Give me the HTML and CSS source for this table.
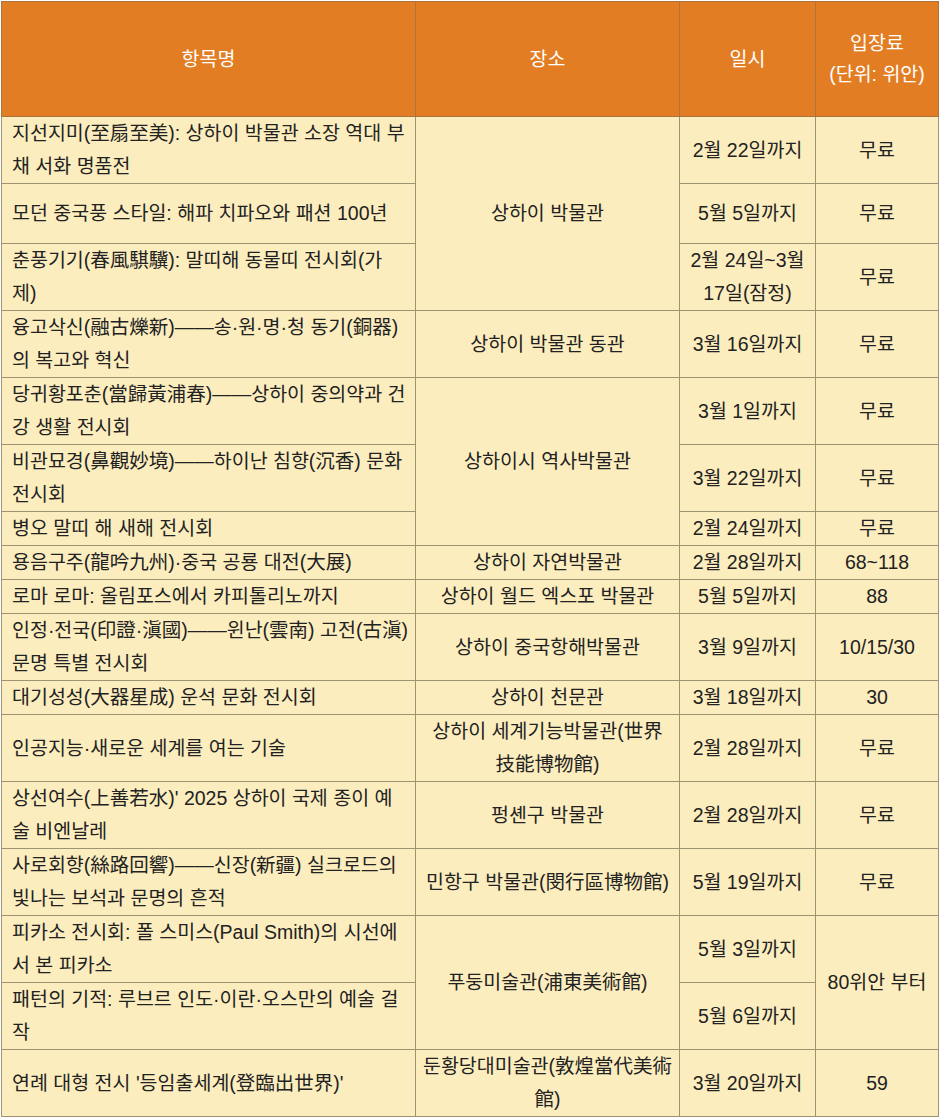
FILE: index.html
```html
<!DOCTYPE html>
<html lang="ko">
<head>
<meta charset="utf-8">
<title>상하이 전시 일정</title>
<link rel="stylesheet" href="styles.css">
</head>
<body>
<div class="page">
<table class="expo">
  <colgroup>
    <col class="c-name">
    <col class="c-place">
    <col class="c-date">
    <col class="c-fee">
  </colgroup>
  <thead>
    <tr class="head-row">
      <th>항목명</th>
      <th>장소</th>
      <th>일시</th>
      <th>입장료<br>(단위: 위안)</th>
    </tr>
  </thead>
  <tbody>
    <tr>
      <td class="name">지선지미(至扇至美): 상하이 박물관 소장 역대 부채 서화 명품전</td>
      <td class="mid" rowspan="3">상하이 박물관</td>
      <td class="mid">2월 22일까지</td>
      <td class="mid">무료</td>
    </tr>
    <tr class="row-60">
      <td class="name">모던 중국풍 스타일: 해파 치파오와 패션 100년</td>
      <td class="mid">5월 5일까지</td>
      <td class="mid">무료</td>
    </tr>
    <tr>
      <td class="name">춘풍기기(春風騏驥): 말띠해 동물띠 전시회(가<br>제)</td>
      <td class="mid">2월 24일~3월 17일(잠정)</td>
      <td class="mid">무료</td>
    </tr>
    <tr>
      <td class="name">융고삭신(融古爍新)——송·원·명·청 동기(銅器)의 복고와 혁신</td>
      <td class="mid">상하이 박물관 동관</td>
      <td class="mid">3월 16일까지</td>
      <td class="mid">무료</td>
    </tr>
    <tr>
      <td class="name">당귀황포춘(當歸黃浦春)——상하이 중의약과 건강 생활 전시회</td>
      <td class="mid" rowspan="3">상하이시 역사박물관</td>
      <td class="mid">3월 1일까지</td>
      <td class="mid">무료</td>
    </tr>
    <tr>
      <td class="name">비관묘경(鼻觀妙境)——하이난 침향(沉香) 문화 전시회</td>
      <td class="mid">3월 22일까지</td>
      <td class="mid">무료</td>
    </tr>
    <tr>
      <td class="name">병오 말띠 해 새해 전시회</td>
      <td class="mid">2월 24일까지</td>
      <td class="mid">무료</td>
    </tr>
    <tr>
      <td class="name">용음구주(龍吟九州)·중국 공룡 대전(大展)</td>
      <td class="mid">상하이 자연박물관</td>
      <td class="mid">2월 28일까지</td>
      <td class="mid">68~118</td>
    </tr>
    <tr>
      <td class="name">로마 로마: 올림포스에서 카피톨리노까지</td>
      <td class="mid">상하이 월드 엑스포 박물관</td>
      <td class="mid">5월 5일까지</td>
      <td class="mid">88</td>
    </tr>
    <tr>
      <td class="name">인정·전국(印證·滇國)——윈난(雲南) 고전(古滇) 문명 특별 전시회</td>
      <td class="mid">상하이 중국항해박물관</td>
      <td class="mid">3월 9일까지</td>
      <td class="mid">10/15/30</td>
    </tr>
    <tr>
      <td class="name">대기성성(大器星成) 운석 문화 전시회</td>
      <td class="mid">상하이 천문관</td>
      <td class="mid">3월 18일까지</td>
      <td class="mid">30</td>
    </tr>
    <tr>
      <td class="name">인공지능·새로운 세계를 여는 기술</td>
      <td class="mid">상하이 세계기능박물관(世界<br>技能博物館)</td>
      <td class="mid">2월 28일까지</td>
      <td class="mid">무료</td>
    </tr>
    <tr>
      <td class="name">상선여수(上善若水)' 2025 상하이 국제 종이 예술 비엔날레</td>
      <td class="mid">펑셴구 박물관</td>
      <td class="mid">2월 28일까지</td>
      <td class="mid">무료</td>
    </tr>
    <tr>
      <td class="name">사로회향(絲路回響)——신장(新疆) 실크로드의 빛나는 보석과 문명의 흔적</td>
      <td class="mid">민항구 박물관(閔行區博物館)</td>
      <td class="mid">5월 19일까지</td>
      <td class="mid">무료</td>
    </tr>
    <tr>
      <td class="name">피카소 전시회: 폴 스미스(Paul Smith)의 시선에서 본 피카소</td>
      <td class="mid" rowspan="2">푸둥미술관(浦東美術館)</td>
      <td class="mid">5월 3일까지</td>
      <td class="mid" rowspan="2">80위안 부터</td>
    </tr>
    <tr>
      <td class="name">패턴의 기적: 루브르 인도·이란·오스만의 예술 걸작</td>
      <td class="mid">5월 6일까지</td>
    </tr>
    <tr>
      <td class="name">연례 대형 전시 '등임출세계(登臨出世界)'</td>
      <td class="mid">둔황당대미술관(敦煌當代美術館)</td>
      <td class="mid">3월 20일까지</td>
      <td class="mid">59</td>
    </tr>
  </tbody>
</table>
</div>
</body>
</html>
```
FILE: styles.css
```css
html, body {
  margin: 0;
  padding: 0;
  background: #ffffff;
}

.page {
  padding: 1px 0 0 1px;
}

.expo {
  width: 937px;
  table-layout: fixed;
  border-collapse: collapse;
  font-family: "Liberation Sans", "Noto Sans CJK KR", sans-serif;
  font-size: 19.5px;
  line-height: 33px;
  color: #222222;
}

.c-name { width: 414px; }
.c-place { width: 264px; }
.c-date { width: 136px; }
.c-fee { width: 123px; }

.expo th,
.expo td {
  border: 1px solid #9d9474;
  vertical-align: middle;
}

.head-row {
  height: 115px;
}

.expo th {
  background: #e37d23;
  color: #ffffff;
  font-weight: normal;
  text-align: center;
  line-height: 31px;
  padding: 0 6px;
  border-color: #a8753f;
}

.expo td {
  background: #fcedbe;
  padding: 0 6px 0 10px;
}

.expo td.name {
  text-align: left;
}

.expo td.mid {
  text-align: center;
  padding: 0 6px;
}

.row-60 {
  height: 60px;
}
```
